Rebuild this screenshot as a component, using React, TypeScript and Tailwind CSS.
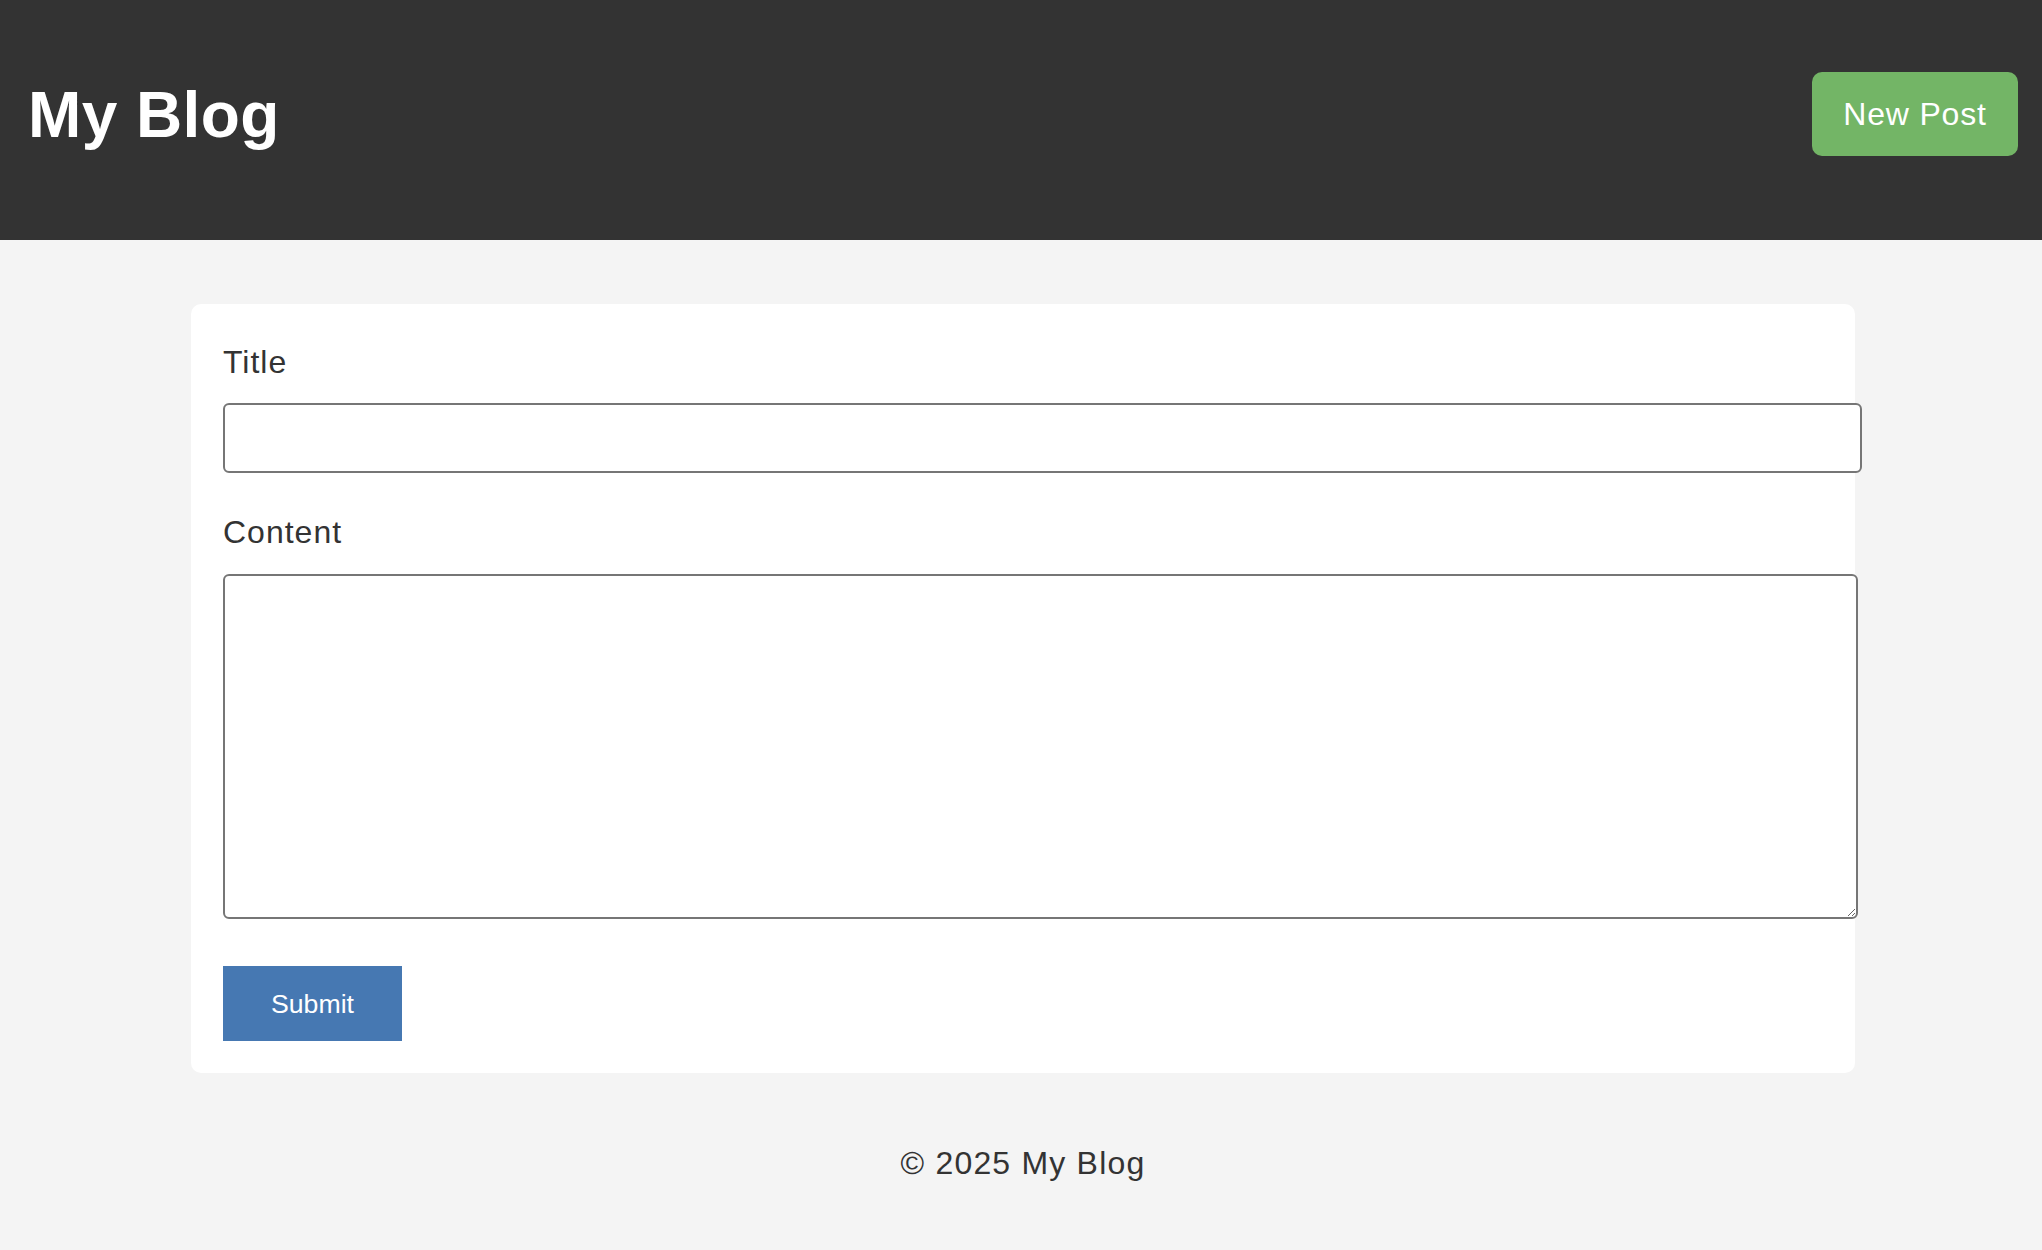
import React, { useState } from "react";

export default function App() {
  const [title, setTitle] = useState("");
  const [content, setContent] = useState("");

  return (
    <div className="min-h-[1250px] bg-[#f4f4f4] font-['Liberation_Sans',Arial,sans-serif] text-[#333333]">
      {/* Header */}
      <header className="h-[240px] bg-[#333333] flex justify-between items-start pl-[28px] pr-[24px]">
        <h1 className="mt-[79px] text-[64px] leading-[72px] font-bold text-white tracking-[0.4px]">
          My Blog
        </h1>
        <button className="mt-[72px] h-[84px] w-[206px] rounded-[10px] bg-[#73b566] text-[32px] text-white tracking-[0.8px] flex items-center justify-center">
          New Post
        </button>
      </header>

      {/* Form card */}
      <main className="flex justify-center pl-[4px] pt-[64px]">
        <form
          className="w-[1664px] bg-white rounded-[10px] pt-[40px] pb-[32px] px-[32px]"
          onSubmit={(e) => e.preventDefault()}
        >
          <label className="block text-[32px] leading-[36px] tracking-[1px]">Title</label>
          <input
            value={title}
            onChange={(e) => setTitle(e.target.value)}
            type="text"
            className="block mt-[23px] w-[1639px] h-[70px] border-2 border-[#767676] rounded-[6px] bg-white px-[4px] text-[26px] outline-none"
          />

          <label className="block mt-[41px] text-[32px] leading-[36px] tracking-[1px]">
            Content
          </label>
          <textarea
            value={content}
            onChange={(e) => setContent(e.target.value)}
            className="block mt-[24px] w-[1635px] h-[345px] border-2 border-[#767676] rounded-[6px] bg-white p-[4px] text-[26px] outline-none resize"
          ></textarea>

          <button
            type="submit"
            className="block mt-[47px] w-[179px] h-[75px] bg-[#4678b2] text-white text-[26.67px]"
          >
            Submit
          </button>
        </form>
      </main>

      {/* Footer */}
      <footer className="flex justify-center pl-[4px] mt-[72px]">
        <p className="text-[32px] leading-[36px] tracking-[1.2px]">© 2025 My Blog</p>
      </footer>
    </div>
  );
}
